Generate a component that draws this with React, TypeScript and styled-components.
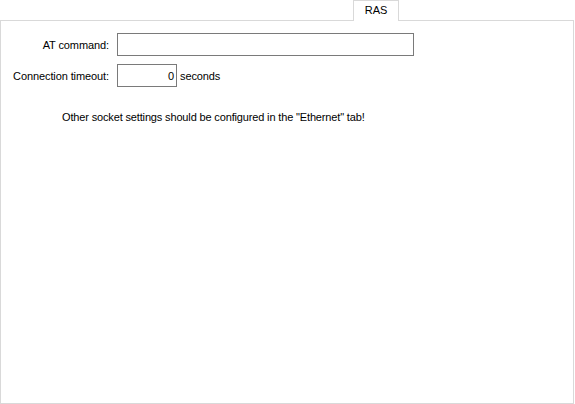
import React from "react";
import styled, { createGlobalStyle } from "styled-components";

const Global = createGlobalStyle`
  html, body { margin: 0; padding: 0; background: #ffffff; }
  body { font-family: Tahoma, "Liberation Sans", Arial, sans-serif; font-size: 11px; color: #000; }
`;

const Page = styled.div`
  width: 575px;
  height: 404px;
  display: flex;
  flex-direction: column;
  box-sizing: border-box;
`;

const TabStrip = styled.div`
  height: 20px;
  display: flex;
  justify-content: flex-end;
  padding-right: 176px;
  position: relative;
  z-index: 1;
`;

const Tab = styled.div`
  width: 46px;
  height: 21px;
  box-sizing: border-box;
  border: 1px solid #d9d9d9;
  border-bottom: none;
  background: #ffffff;
  display: flex;
  justify-content: center;
  padding-top: 3px;
  font-size: 11px;
  color: #000;
`;

const Panel = styled.div`
  flex: 1;
  width: 574px;
  box-sizing: border-box;
  border: 1px solid #d9d9d9;
  padding: 12px 0 0 0;
  display: flex;
  flex-direction: column;
`;

const Form = styled.div`
  display: grid;
  grid-template-columns: 108px auto;
  column-gap: 8px;
  row-gap: 8px;
  align-items: center;
  letter-spacing: -0.1px;
`;

const Label = styled.label`
  text-align: right;
  font-size: 11px;
  white-space: nowrap;
`;

const Field = styled.div`
  display: flex;
  align-items: center;
  gap: 3px;
`;

const Input = styled.div<{ $w: number; $right?: boolean }>`
  width: ${(p) => p.$w}px;
  height: 23px;
  box-sizing: border-box;
  border: 1px solid #7a7a7a;
  background: #fff;
  display: flex;
  align-items: center;
  justify-content: ${(p) => (p.$right ? "flex-end" : "flex-start")};
  padding: 0 2px;
  font-size: 11px;
  color: #000;
`;

const Note = styled.div`
  margin: 24px 0 0 61px;
  font-size: 11px;
  letter-spacing: -0.15px;
`;

export default function App() {
  return (
    <>
      <Global />
      <Page>
        <TabStrip>
          <Tab>RAS</Tab>
        </TabStrip>
        <Panel>
          <Form>
            <Label>AT command:</Label>
            <Field>
              <Input $w={297} />
            </Field>
            <Label>Connection timeout:</Label>
            <Field>
              <Input $w={60} $right>0</Input>
              <span>seconds</span>
            </Field>
          </Form>
          <Note>Other socket settings should be configured in the "Ethernet" tab!</Note>
        </Panel>
      </Page>
    </>
  );
}
